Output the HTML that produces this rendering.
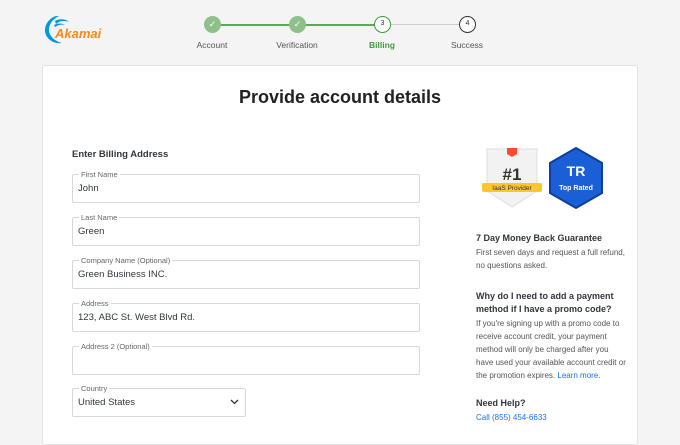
<!DOCTYPE html>
<html><head><meta charset="utf-8"><style>
*{margin:0;padding:0;box-sizing:border-box}
body{width:680px;height:425px;overflow:hidden;background:#f4f4f4;font-family:"Liberation Sans",sans-serif;position:relative;color:#32363c}
.a{position:absolute}
.card{left:42px;top:65px;width:596px;height:380px;background:#fff;border:1px solid #e3e3e3;border-radius:3px}
.f{position:absolute;left:72px;width:348px;height:29px;border:1px solid #d6d9dc;border-radius:2px}
.f .l{position:absolute;left:6px;top:-5px;background:#fff;padding:0 2px;font-size:7.5px;color:#666}
.f .v{position:absolute;left:5px;top:8px;font-size:9.5px;color:#32363c}
.step{position:absolute;width:17px;height:17px;border-radius:50%;top:16px;font-size:7px;text-align:center;line-height:14px}
.sl{position:absolute;top:40px;font-size:8.5px;color:#555;width:80px;text-align:center}
.p{font-size:8px;color:#555;line-height:13px}
.h{font-size:9px;font-weight:bold;color:#32363c;line-height:13px}
</style></head><body>
<svg class="a" style="left:43px;top:15px" width="68" height="30" viewBox="0 0 68 30">
<path d="M13 1 C4 4 0 13 3 20 C6 26 12 29 19 28 C11 26 5 20 6 13 C7 8 10 4 16 1Z" fill="#0099dd"/>
<path d="M12 6 C17 3 23 4 26 7 C21 5 16 6 13 9Z" fill="#0099dd"/>
<path d="M11 10 C15 8 19 8 22 10 C18 9 15 10 12 12Z" fill="#0099dd"/>
<text x="12" y="23" font-family="Liberation Sans" font-size="13" font-weight="bold" font-style="italic" fill="#f38a1a">Akamai</text>
</svg>
<div class="a" style="left:212px;top:24px;width:170px;height:2px;background:#5ea85c"></div>
<div class="a" style="left:382px;top:24px;width:85px;height:1px;background:#ccc"></div>
<div class="step" style="left:204px;background:#8fc08c;color:#fff;line-height:17px;font-size:9px">✓</div>
<div class="step" style="left:289px;background:#8fc08c;color:#fff;line-height:17px;font-size:9px">✓</div>
<div class="step" style="left:374px;background:#fff;border:1.5px solid #3d9a3c;color:#333">3</div>
<div class="step" style="left:459px;background:#fff;border:1.5px solid #333;color:#333">4</div>
<div class="sl" style="left:172px">Account</div>
<div class="sl" style="left:257px">Verification</div>
<div class="sl" style="left:342px;color:#3d9a3c;font-weight:bold">Billing</div>
<div class="sl" style="left:427px">Success</div>
<div class="a card"></div>
<div class="a" style="left:42px;top:87px;width:596px;text-align:center;font-size:18px;font-weight:bold;color:#222">Provide account details</div>
<div class="a h" style="left:72px;top:148px;font-size:9.5px">Enter Billing Address</div>
<div class="f" style="top:174px"><span class="l">First Name</span><span class="v">John</span></div>
<div class="f" style="top:217px"><span class="l">Last Name</span><span class="v">Green</span></div>
<div class="f" style="top:260px"><span class="l">Company Name (Optional)</span><span class="v">Green Business INC.</span></div>
<div class="f" style="top:303px"><span class="l">Address</span><span class="v">123, ABC St. West Blvd Rd.</span></div>
<div class="f" style="top:346px"><span class="l">Address 2 (Optional)</span></div>
<div class="f" style="top:388px;width:174px"><span class="l">Country</span><span class="v">United States</span>
<svg class="a" style="right:6px;top:10px" width="9" height="6" viewBox="0 0 9 6"><path d="M1 1 L4.5 4.5 L8 1" stroke="#333" stroke-width="1.3" fill="none"/></svg></div>
<svg class="a" style="left:482px;top:147px" width="60" height="62" viewBox="0 0 60 62">
<path d="M5 2 H55 V44 L30 60 L5 44Z" fill="#f2f2f2" stroke="#ddd"/>
<path d="M25 1 h10 v6 l-5 3 l-5 -3z" fill="#ff492c"/>
<text x="30" y="33" text-anchor="middle" font-family="Liberation Sans" font-weight="bold" font-size="17" fill="#333">#1</text>
<rect x="0" y="36" width="60" height="9" rx="2" fill="#fdc52e"/>
<text x="30" y="43" text-anchor="middle" font-family="Liberation Sans" font-size="6.5" fill="#333">IaaS Provider</text>
</svg>
<svg class="a" style="left:548px;top:146px" width="56" height="64" viewBox="0 0 56 64">
<path d="M28 2 L54 17 V47 L28 62 L2 47 V17Z" fill="#1a5fd6" stroke="#0e3f9e" stroke-width="2"/>
<text x="28" y="30" text-anchor="middle" font-family="Liberation Sans" font-weight="bold" font-size="14" fill="#fff">TR</text>
<text x="28" y="44" text-anchor="middle" font-family="Liberation Sans" font-weight="bold" font-size="7" fill="#fff">Top Rated</text>
</svg>
<div class="a h" style="left:476px;top:232px">7 Day Money Back Guarantee</div>
<div class="a p" style="left:476px;top:246px;width:156px">First seven days and request a full refund, no questions asked.</div>
<div class="a h" style="left:476px;top:290px;width:160px">Why do I need to add a payment method if I have a promo code?</div>
<div class="a p" style="left:476px;top:317px;width:150px">If you're signing up with a promo code to receive account credit, your payment method will only be charged after you have used your available account credit or the promotion expires. <span style="color:#1a73e8">Learn more.</span></div>
<div class="a h" style="left:476px;top:397px">Need Help?</div>
<div class="a p" style="left:476px;top:411px;color:#1a73e8">Call (855) 454-6633</div>
</body></html>
